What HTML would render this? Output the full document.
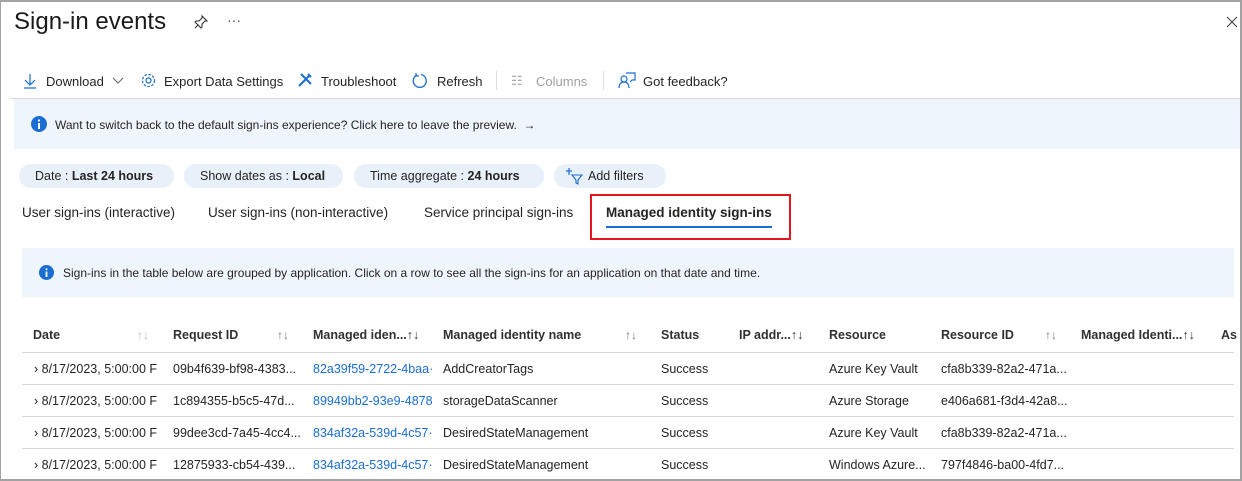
<!DOCTYPE html>
<html><head><meta charset="utf-8"><style>
*{margin:0;padding:0;box-sizing:border-box}
body{width:1242px;height:481px;overflow:hidden;background:#fff;font-family:"Liberation Sans",sans-serif;color:#252423;position:relative}
.frame{position:absolute;left:0;top:0;width:1242px;height:481px;border:2px solid #a3a3a3;border-left-width:1px;pointer-events:none;z-index:9}
.a{position:absolute;white-space:nowrap}
.t{font-size:13px}
.tab{font-size:13.5px}
.pill{position:absolute;top:164px;height:24px;background:#e8f1fa;border-radius:12px;font-size:12.5px;line-height:24px;padding:0 16px}
.hd{font-size:12.5px;font-weight:bold;color:#323130;top:328px}
.row{position:absolute;left:22px;width:1212px;height:1px;background:#d6d6d6}
.c{font-size:12.5px;position:absolute;white-space:nowrap}
.lnk{color:#1a6dd1}
.arr{color:#777;font-size:12px}
</style></head><body>
<div class="frame"></div>
<div class="a" style="left:14px;top:8px;font-size:24px;color:#1b1a19">Sign-in events</div>
<svg class="a" style="left:193px;top:14px" width="16" height="16" viewBox="0 0 16 16"><path d="M9 2l5 5-2 0-3 3 0 3-1 1-6-6 1-1 3 0 3-3z M5 11l-3 3" fill="none" stroke="#333" stroke-width="1.1"/></svg>
<div class="a" style="left:227px;top:12px;font-size:14px;color:#555">···</div>
<svg class="a" style="left:1226px;top:16px" width="12" height="12"><path d="M1 1l10 10M11 1L1 11" stroke="#444" stroke-width="1.1"/></svg>

<svg class="a" style="left:23px;top:73px" width="14" height="16"><path d="M7 1v11M2 7l5 5 5-5M1 15h12" fill="none" stroke="#1a6dd1" stroke-width="1.2"/></svg>
<div class="a t" style="left:46px;top:74px">Download</div>
<svg class="a" style="left:112px;top:77px" width="12" height="8"><path d="M1 1l5 5 5-5" fill="none" stroke="#666" stroke-width="1.1"/></svg>
<svg class="a" style="left:140px;top:72px" width="17" height="17" viewBox="0 0 17 17"><circle cx="8.5" cy="8.5" r="2.5" fill="none" stroke="#1a6dd1" stroke-width="1.2"/><circle cx="8.5" cy="8.5" r="6" fill="none" stroke="#1a6dd1" stroke-width="1.2" stroke-dasharray="2.5 1.5"/></svg>
<div class="a t" style="left:164px;top:74px">Export Data Settings</div>
<svg class="a" style="left:297px;top:72px" width="16" height="16"><path d="M2 14L12 4M4 2l10 10M11 2l3 3" stroke="#1a6dd1" stroke-width="2"/></svg>
<div class="a t" style="left:321px;top:74px">Troubleshoot</div>
<svg class="a" style="left:412px;top:72px" width="17" height="17"><path d="M5 3A6.5 6.5 0 1 0 9 2.5" fill="none" stroke="#1a6dd1" stroke-width="1.3"/><path d="M4 1v3h3" fill="none" stroke="#1a6dd1" stroke-width="1.2"/></svg>
<div class="a t" style="left:437px;top:74px">Refresh</div>
<div class="a" style="left:496px;top:71px;width:1px;height:19px;background:#ddd"></div>
<div class="a t" style="left:511px;top:73px;color:#aaa">☷</div>
<div class="a t" style="left:536px;top:74px;color:#a19f9d">Columns</div>
<div class="a" style="left:603px;top:71px;width:1px;height:19px;background:#ddd"></div>
<svg class="a" style="left:618px;top:71px" width="18" height="18"><circle cx="6" cy="8" r="3" fill="none" stroke="#1a6dd1" stroke-width="1.2"/><path d="M1 17c0-4 2-6 5-6s5 2 5 6M8 2h9v7h-3l-2 2" fill="none" stroke="#1a6dd1" stroke-width="1.2"/></svg>
<div class="a t" style="left:643px;top:74px">Got feedback?</div>
<div class="a" style="left:10px;top:98px;width:1230px;height:1px;background:#d6d6d6"></div>

<div class="a" style="left:14px;top:99px;width:1226px;height:50px;background:#eff5fc"></div>
<svg class="a" style="left:31px;top:116px" width="16" height="16"><circle cx="8" cy="8" r="8" fill="#1a6dd1"/><rect x="7" y="7" width="2" height="6" fill="#fff"/><circle cx="8" cy="4.5" r="1.1" fill="#fff"/></svg>
<div class="a" style="left:55px;top:118px;font-size:12px">Want to switch back to the default sign-ins experience? Click here to leave the preview. &nbsp;→</div>

<div class="pill" style="left:19px;width:155px">Date : <b>Last 24 hours</b></div>
<div class="pill" style="left:184px;width:159px">Show dates as : <b>Local</b></div>
<div class="pill" style="left:354px;width:190px">Time aggregate : <b>24 hours</b></div>
<div class="pill" style="left:554px;width:112px;padding-left:34px">Add filters</div>
<svg class="a" style="left:565px;top:167px" width="18" height="18"><path d="M4 1v7M1 4h6" stroke="#1a6dd1" stroke-width="1.2"/><path d="M7 8h10l-4 5v4l-2-1v-3z" fill="none" stroke="#1a6dd1" stroke-width="1.1"/></svg>

<div class="a tab" style="left:22px;top:205px">User sign-ins (interactive)</div>
<div class="a tab" style="left:208px;top:205px">User sign-ins (non-interactive)</div>
<div class="a tab" style="left:424px;top:205px">Service principal sign-ins</div>
<div class="a tab" style="left:606px;top:205px;font-weight:bold">Managed identity sign-ins</div>
<div class="a" style="left:606px;top:226px;width:166px;height:2px;background:#1a6dd1"></div>
<div class="a" style="left:590px;top:194px;width:201px;height:46px;border:2px solid #e3161b"></div>

<div class="a" style="left:22px;top:248px;width:1212px;height:49px;background:#eff5fc"></div>
<svg class="a" style="left:39px;top:265px" width="15" height="15"><circle cx="7.5" cy="7.5" r="7.5" fill="#1a6dd1"/><rect x="6.6" y="6.5" width="1.8" height="5.5" fill="#fff"/><circle cx="7.5" cy="4.2" r="1" fill="#fff"/></svg>
<div class="a" style="left:63px;top:266px;font-size:12px">Sign-ins in the table below are grouped by application. Click on a row to see all the sign-ins for an application on that date and time.</div>

<div class="a hd" style="left:33px">Date</div><div class="a arr" style="left:137px;top:328px;color:#bbb">↑↓</div>
<div class="a hd" style="left:173px">Request ID</div><div class="a arr" style="left:277px;top:328px">↑↓</div>
<div class="a hd" style="left:313px">Managed iden...↑↓</div>
<div class="a hd" style="left:443px">Managed identity name</div><div class="a arr" style="left:625px;top:328px">↑↓</div>
<div class="a hd" style="left:661px">Status</div>
<div class="a hd" style="left:739px">IP addr...↑↓</div>
<div class="a hd" style="left:829px">Resource</div>
<div class="a hd" style="left:941px">Resource ID</div><div class="a arr" style="left:1045px;top:328px">↑↓</div>
<div class="a hd" style="left:1081px">Managed Identi...↑↓</div>
<div class="a hd" style="left:1221px">As</div>
<div class="row" style="top:352px"></div>
<div class="row" style="top:384px"></div>
<div class="row" style="top:416px"></div>
<div class="row" style="top:448px"></div>

<div class="c" style="left:34px;top:362px">›&nbsp;8/17/2023, 5:00:00 F</div>
<div class="c" style="left:173px;top:362px">09b4f639-bf98-4383...</div>
<div class="c lnk" style="left:313px;top:362px">82a39f59-2722-4baa·</div>
<div class="c" style="left:443px;top:362px">AddCreatorTags</div>
<div class="c" style="left:661px;top:362px">Success</div>
<div class="c" style="left:829px;top:362px">Azure Key Vault</div>
<div class="c" style="left:941px;top:362px">cfa8b339-82a2-471a...</div>

<div class="c" style="left:34px;top:394px">›&nbsp;8/17/2023, 5:00:00 F</div>
<div class="c" style="left:173px;top:394px">1c894355-b5c5-47d...</div>
<div class="c lnk" style="left:313px;top:394px">89949bb2-93e9-4878</div>
<div class="c" style="left:443px;top:394px">storageDataScanner</div>
<div class="c" style="left:661px;top:394px">Success</div>
<div class="c" style="left:829px;top:394px">Azure Storage</div>
<div class="c" style="left:941px;top:394px">e406a681-f3d4-42a8...</div>

<div class="c" style="left:34px;top:426px">›&nbsp;8/17/2023, 5:00:00 F</div>
<div class="c" style="left:173px;top:426px">99dee3cd-7a45-4cc4...</div>
<div class="c lnk" style="left:313px;top:426px">834af32a-539d-4c57·</div>
<div class="c" style="left:443px;top:426px">DesiredStateManagement</div>
<div class="c" style="left:661px;top:426px">Success</div>
<div class="c" style="left:829px;top:426px">Azure Key Vault</div>
<div class="c" style="left:941px;top:426px">cfa8b339-82a2-471a...</div>

<div class="c" style="left:34px;top:458px">›&nbsp;8/17/2023, 5:00:00 F</div>
<div class="c" style="left:173px;top:458px">12875933-cb54-439...</div>
<div class="c lnk" style="left:313px;top:458px">834af32a-539d-4c57·</div>
<div class="c" style="left:443px;top:458px">DesiredStateManagement</div>
<div class="c" style="left:661px;top:458px">Success</div>
<div class="c" style="left:829px;top:458px">Windows Azure...</div>
<div class="c" style="left:941px;top:458px">797f4846-ba00-4fd7...</div>
</body></html>
